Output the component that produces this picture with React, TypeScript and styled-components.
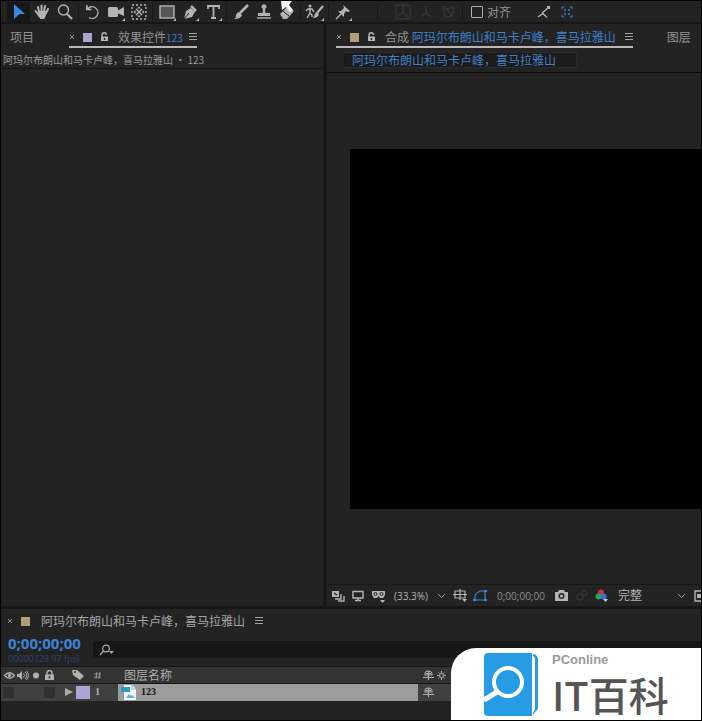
import React from 'react';
import styled, { createGlobalStyle } from 'styled-components';

const cjk = `'Noto Sans CJK SC', sans-serif`;
const latin = `'Open Sans', 'Noto Sans CJK SC', sans-serif`;
const COMP = '阿玛尔布朗山和马卡卢峰，喜马拉雅山';

const GlobalStyle = createGlobalStyle`
  *, *::before, *::after { box-sizing: border-box; }
  body { margin: 0; background: #000; overflow: hidden; }
  button, input, select { font: inherit; color: inherit; margin: 0; }
`;

const Shell = styled.div`
  position: relative;
  display: grid;
  grid-template-rows: 21px minmax(0, 1fr) 111px;
  gap: 2px;
  height: 100vh;
  border: 1px solid #000;
  background: #161616;
  color: #9a9a9a;
  font: 12px/16px ${cjk};
  overflow: hidden;
`;

const Toolbar = styled.header`
  display: flex;
  align-items: center;
  padding-left: 6px;
  background: #232323;
  white-space: nowrap;
`;

const ToolButton = styled.button<{ $active?: boolean; $dim?: boolean; $accent?: boolean }>`
  position: relative;
  display: flex;
  flex: none;
  align-items: center;
  justify-content: center;
  width: 23px;
  height: 20px;
  padding: 0;
  border: 0;
  background: ${p => (p.$active ? '#171717' : 'transparent')};
  color: ${p => (p.$dim ? '#343434' : p.$active || p.$accent ? '#3b87dc' : '#b4b4b4')};
`;

const Divider = styled.span<{ $wide?: boolean }>`
  flex: none;
  width: 1px;
  height: 18px;
  margin: 0 ${p => (p.$wide ? '13px 0 23px' : '2px')};
  background: #181818;
`;

const Cursor = styled.svg`
  position: absolute;
  top: -1px;
  left: 6px;
`;

const Snap = styled.label`
  display: flex;
  align-items: center;
  gap: 4px;
  margin: 0 21px 0 6px;
  color: #929292;
`;

const Check = styled.input`
  appearance: none;
  width: 12px;
  height: 12px;
  border: 1px solid #b5aba5;
  border-radius: 1px;
`;

const Workspace = styled.main`
  display: grid;
  grid-template-columns: minmax(0, 322fr) minmax(0, 374fr);
  gap: 4px;
  min-height: 0;
  padding-bottom: 1px;
`;

const Panel = styled.section`
  display: flex;
  flex-direction: column;
  min-width: 0;
  min-height: 0;
  background: #232323;
  overflow: hidden;
`;

const Tabs = styled.nav<{ $gap: number }>`
  display: flex;
  flex: none;
  gap: ${p => p.$gap}px;
  height: 24px;
  padding: 0 9px;
  white-space: nowrap;
`;

const Tab = styled.div<{ $active?: boolean }>`
  display: flex;
  flex: none;
  align-items: center;
  height: 24px;
  padding-top: 4px;
  border-bottom: 2px solid ${p => (p.$active ? '#b9b9b9' : 'transparent')};
  color: #929292;
`;

const PlainButton = styled.button`
  display: flex;
  align-items: center;
  padding: 0;
  border: 0;
  background: none;
  color: #929292;
`;

const TabLabel = styled.button`
  padding: 0;
  border: 0;
  background: none;
  color: #929292;
  line-height: 16px;
`;

const Swatch = styled.span<{ $color: string }>`
  width: 9px;
  height: 9px;
  margin: 0 8px;
  background: ${p => p.$color};
`;

const Blue = styled.span<{ $small?: boolean }>`
  color: #3f80c8;
  font-size: ${p => (p.$small ? '10px' : '12px')};
  line-height: 12px;
`;

const Menu = styled(PlainButton)<{ $gap: number }>`
  margin-left: ${p => p.$gap}px;
  color: #a5a5a5;
`;

const Source = styled.div`
  flex: none;
  height: 21px;
  padding: 4px 2px 0;
  border-bottom: 1px solid #111;
  font-size: 10px;
  white-space: nowrap;
`;

const Flow = styled.div`
  flex: none;
  height: 25px;
  padding: 4px 17px;
  border-bottom: 1px solid #0c0c0c;
`;

const FlowButton = styled.button`
  display: block;
  height: 16px;
  padding: 0 20px 0 7px;
  border: 1px solid #2b2b2b;
  border-left-color: #181818;
  background: #1b1b1b;
  color: #4080c5;
  line-height: 14px;
  white-space: nowrap;
`;

const Stage = styled.div`
  display: flex;
  flex: 1;
  align-items: center;
  min-height: 0;
  padding-left: 23px;
  overflow: hidden;
`;

const Canvas = styled.div`
  flex: none;
  width: 640px;
  height: 360px;
  background: #000;
`;

const ViewBar = styled.footer`
  display: flex;
  flex: none;
  align-items: center;
  height: 22px;
  padding-left: 1px;
  border-top: 1px solid #181818;
  font: 10px/16px ${latin};
  white-space: nowrap;
  overflow: hidden;
`;

const BarButton = styled(ToolButton)`
  width: 20px;
`;

const Picker = styled.label<{ $width: number }>`
  display: flex;
  flex: none;
  align-items: center;
  width: ${p => p.$width}px;
  margin: 0 4px 0 6px;
`;

const Select = styled.select<{ $size: number }>`
  flex: 1;
  min-width: 0;
  padding: 0;
  border: 0;
  appearance: none;
  background: #232323;
  color: #b5b5b5;
  font-size: ${p => p.$size}px;
`;

const ViewTime = styled.button`
  margin: 0 7px;
  padding: 0;
  border: 0;
  background: none;
  color: #929292;
`;

const TimelineTab = styled.div`
  display: flex;
  flex: none;
  align-items: center;
  height: 24px;
  padding-left: 6px;
  color: #a6a6a6;
  white-space: nowrap;
`;

const Finder = styled.div`
  display: grid;
  flex: none;
  grid-template-columns: 92px minmax(0, 1fr);
  height: 33px;
`;

const Timecode = styled.div`
  padding-left: 7px;
  font-family: ${latin};
  white-space: nowrap;
`;

const Time = styled.button`
  display: block;
  padding: 0;
  border: 0;
  background: none;
  color: #3c83d8;
  font: bold 15px/20px ${latin};
`;

const Frames = styled.div`
  color: #27466d;
  font-size: 9px;
  line-height: 12px;
`;

const Search = styled.label`
  display: flex;
  align-items: center;
  height: 17px;
  margin-top: 8px;
  padding-left: 6px;
  background: #171717;
`;

const SearchInput = styled.input`
  flex: 1;
  min-width: 0;
  height: 16px;
  padding: 0 4px;
  border: 0;
  outline: 0;
  background: none;
`;

const Layers = styled.table`
  flex: none;
  width: 100%;
  table-layout: fixed;
  border-collapse: collapse;
`;

const Col = styled.col<{ $width?: number }>`
  width: ${p => (p.$width ? `${p.$width}px` : 'auto')};
`;

const HeadCell = styled.th`
  height: 17px;
  padding: 0;
  border-top: 1px solid #161616;
  border-bottom: 1px solid #161616;
  background: #333;
  color: #b0b0b0;
  font-weight: normal;
  line-height: 14px;
  text-align: left;
`;

const Cell = styled.td<{ $selected?: boolean }>`
  height: 17px;
  padding: 0;
  background: ${p => (p.$selected ? '#9c9c9c' : '#404040')};
  color: ${p => (p.$selected ? '#151515' : '#b0b0b0')};
  font: bold 10px/14px 'Liberation Serif', serif;
`;

const Inline = styled.div<{ $pad?: number; $gap?: number }>`
  display: flex;
  align-items: center;
  height: 16px;
  gap: ${p => p.$gap ?? 0}px;
  padding-left: ${p => p.$pad ?? 0}px;
`;

const Switch = styled.button`
  width: 11px;
  height: 11px;
  padding: 0;
  border: 0;
  background: #303030;
`;

const LabelColor = styled.span`
  width: 14px;
  height: 13px;
  background: #aaa5d4;
`;

const Badge = styled.aside`
  position: absolute;
  right: 0;
  bottom: 0;
  display: flex;
  width: 250px;
  height: 72px;
  padding: 5px 0 0 33px;
  border-top-left-radius: 25px;
  background: #fff;
`;

const Brand = styled.div`
  padding-left: 12px;
  color: #999;
  font: bold 13px/14px 'Liberation Sans', sans-serif;
  white-space: nowrap;
`;

const BrandName = styled.div`
  color: #555;
  font: 500 40px/54px ${cjk};
`;

type IconProps = { w?: number; h?: number; children: React.ReactNode };
const Icon = ({ w = 16, h = 16, children }: IconProps) => (
  <svg width={w} height={h} viewBox={`0 0 ${w} ${h}`} fill="none" stroke="currentColor" strokeWidth="1.4" aria-hidden="true">
    {children}
  </svg>
);
const corner = <path d="M19 19v-3l-3 3z" fill="currentColor" stroke="none" />;
const Tool = ({ label, children, ...rest }: any) => (
  <ToolButton aria-label={label} {...rest}>{children}</ToolButton>
);
const Chevron = () => <Icon w={9} h={6}><path d="M1 1l3.5 3.5L8 1" strokeWidth="1" /></Icon>;
const Lines = () => <Icon w={8} h={8}><path d="M0 .5h8M0 3.5h8M0 6.5h8" strokeWidth="1" /></Icon>;
const Close = () => (
  <PlainButton aria-label="关闭"><Icon w={6} h={6}><path d="M1 1l4 4M5 1L1 5" strokeWidth="1" /></Icon></PlainButton>
);
const Unlock = () => (
  <PlainButton aria-label="锁定">
    <Icon w={9} h={10}>
      <path d="M2 5V3a2.2 2.2 0 0 1 4.400 0" stroke="#b5b5b5" />
      <path d="M1 4.500h7V9H1z" fill="#b5b5b5" stroke="none" />
      <path d="M4.500 6v2" stroke="#232323" />
    </Icon>
  </PlainButton>
);
const Shy = () => (
  <Icon w={11} h={11}>
    <path d="M2 5V4a3.500 3 0 0 1 7 0v1zM5.500 1v9M3 3.500h5M0 7.500h11" strokeWidth="1.100" />
  </Icon>
);

export default function App() {
  return (
    <Shell>
      <GlobalStyle />
      <Toolbar>
        <Tool label="选取工具" $active>
          <Icon><path d="M3 0l11 10H8.500L3 15z" fill="currentColor" stroke="none" /></Icon>
        </Tool>
        <Tool label="手形工具">
          <Icon>
            <path d="M5 8L4 3M7.500 7V1.500M10 7l1-5M12 9l2-4M1.500 7l4 5" strokeWidth="2" strokeLinecap="round" />
            <path d="M4.500 7h7.500l1 1.500-2 5L10 15H6.500L3.500 11z" fill="currentColor" stroke="none" />
          </Icon>
        </Tool>
        <Tool label="缩放工具">
          <Icon><circle cx="6.500" cy="6" r="5" /><path d="M10 10l5 5" strokeWidth="2" /></Icon>
        </Tool>
        <Divider />
        <Tool label="旋转工具">
          <Icon><path d="M3 4.500a5.800 5.800 0 1 1 1 9M2 1v4.500h4.500" /><path d="M1 2v4h4z" fill="currentColor" stroke="none" /></Icon>
        </Tool>
        <Tool label="摄像机工具">
          <Icon w={20} h={20}><rect x="2" y="5" width="10" height="10" rx="1.500" fill="currentColor" stroke="none" /><path d="M11 9l7-4v9l-7-3z" fill="currentColor" stroke="none" />{corner}</Icon>
        </Tool>
        <Tool label="向后平移工具">
          <Icon>
            <rect x="1" y="1" width="14" height="14" strokeDasharray="2 2" />
            <path d="M5 5l6 6M11 5l-6 6" />
            <path d="M8 2.500l2 2H6zM8 13.500l2-2H6zM2.500 8l2-2v4zM13.500 8l-2-2v4z" fill="currentColor" stroke="none" />
          </Icon>
        </Tool>
        <Divider />
        <Tool label="矩形工具">
          <Icon w={20} h={20}><rect x="3" y="4" width="14" height="12" fill="#555" />{corner}</Icon>
        </Tool>
        <Tool label="钢笔工具">
          <Icon w={20} h={20}>
            <path d="M4 17l2-8 5-3 4 4-3 5z" fill="currentColor" stroke="none" /><path d="M11 4l5 5" strokeWidth="2.500" /><path d="M4 17l5-6" stroke="#232323" strokeWidth="1" />{corner}
          </Icon>
        </Tool>
        <Tool label="文字工具">
          <Icon w={20} h={20}><path d="M5 7V4h11v3M10.500 4v12M8 16h5" strokeWidth="1.800" />{corner}</Icon>
        </Tool>
        <Divider />
        <Tool label="画笔工具">
          <Icon><path d="M15 1L7 9" strokeWidth="2.500" /><path d="M6 8l3 3c-1 3-4 4-8 4 2-1 2-2 2-4 1-2 2-3 3-3z" fill="currentColor" stroke="none" /></Icon>
        </Tool>
        <Tool label="仿制图章工具">
          <Icon><path d="M6.500 9l.5-4a2.500 2.500 0 1 1 2 0l.5 4H14v3H2V9z" fill="currentColor" stroke="none" /><path d="M1 14h14" /></Icon>
        </Tool>
        <Tool label="橡皮擦工具">
          <Icon><path d="M1 10l7-7 7 4-7 8H4z" fill="currentColor" stroke="none" /><path d="M4 7l6 5" stroke="#232323" strokeWidth="1" /></Icon>
          <Cursor width="13" height="12" viewBox="0 0 13 12" aria-hidden="true"><path d="M0 0h11L8 4l4 5-3 2-4-5-4 3z" fill="#f2f2f2" /></Cursor>
        </Tool>
        <Divider />
        <Tool label="Roto 笔刷工具">
          <Icon w={20} h={20}>
            <circle cx="5" cy="4" r="1.500" fill="currentColor" stroke="none" /><path d="M1 9l2-2h4l2 3M5 6v5l-3 5M5 11l2 2v2" /><path d="M18 4l-6 7" strokeWidth="2.200" /><path d="M11 10l3 2c-1 3-3 4-6 4z" fill="currentColor" stroke="none" />{corner}
          </Icon>
        </Tool>
        <Divider />
        <Tool label="操控点工具">
          <Icon w={20} h={20}><path d="M10 3l7 6-2 1-2-1-2 3v3L5 9h3l3-3z" fill="currentColor" stroke="none" /><path d="M8 12l-5 5" />{corner}</Icon>
        </Tool>
        <Divider $wide />
        <Tool label="本地轴模式" $dim><Icon><path d="M8 8V2M8 8l5 5M8 8l-5 5M1 1h14v14H1z" /></Icon></Tool>
        <Tool label="世界轴模式" $dim><Icon><path d="M8 9V2M8 9l5 4M8 9l-5 4" /></Icon></Tool>
        <Tool label="视图轴模式" $dim><Icon><path d="M2 3l4 2 7-2-2 9-7 1zM6 5l5 7" /></Icon></Tool>
        <Divider />
        <Snap><Check type="checkbox" />对齐</Snap>
        <Tool label="对齐选项">
          <Icon><path d="M2 13l5-3.500 4 4M6 9l6-5" /><rect x="11" y="2" width="3" height="3" fill="currentColor" stroke="none" /></Icon>
        </Tool>
        <Tool label="对齐边缘" $accent>
          <Icon w={12} h={12}><path d="M1 3V1h2M9 1h2v2M11 9v2H9M3 11H1V9M3 4h2M7 4h2M4 3v2M8 3v2M4 7v2M8 7v2M3 8h2M7 8h2" strokeWidth="1" /></Icon>
        </Tool>
      </Toolbar>

      <Workspace>
        <Panel>
          <Tabs $gap={35}>
            <Tab><TabLabel>项目</TabLabel></Tab>
            <Tab $active>
              <Close />
              <Swatch $color="#a9a5cd" /><Unlock />
              <Inline $pad={9}><TabLabel>效果控件<Blue $small>123</Blue></TabLabel></Inline>
              <Menu $gap={6} aria-label="面板菜单"><Lines /></Menu>
            </Tab>
          </Tabs>
          <Source>{COMP} • 123</Source>
        </Panel>

        <Panel>
          <Tabs $gap={34}>
            <Tab $active>
              <Close />
              <Swatch $color="#b09e77" /><Unlock />
              <Inline $pad={9}><TabLabel>合成 <Blue>{COMP}</Blue></TabLabel></Inline>
              <Menu $gap={9} aria-label="面板菜单"><Lines /></Menu>
            </Tab>
            <Tab><TabLabel>图层</TabLabel></Tab>
          </Tabs>
          <Flow><FlowButton>{COMP}</FlowButton></Flow>
          <Stage><Canvas /></Stage>
          <ViewBar>
            <BarButton aria-label="始终预览此视图">
              <Icon w={13} h={12}><path d="M0 1h7v6H0z" fill="currentColor" stroke="none" /><path d="M2 3l3 2" stroke="#232323" /><path d="M3 9h6V4M6 11h6V6" /></Icon>
            </BarButton>
            <BarButton aria-label="主查看器"><Icon w={12} h={12}><path d="M1 1.500h10v6.500H1zM6 8v2.500M3 10.500h6" /></Icon></BarButton>
            <BarButton aria-label="眼镜">
              <Icon w={15} h={14}><path d="M1 2h13v4l-2 3H9L7.500 7 6 9H3L1 6z" fill="currentColor" stroke="none" /><circle cx="4.500" cy="5" r="1.500" stroke="#232323" strokeWidth="1" /><circle cx="10.500" cy="5" r="1.500" stroke="#232323" strokeWidth="1" /><path d="M9 11h5l-2.500 3z" fill="currentColor" stroke="none" /></Icon>
            </BarButton>
            <Picker $width={52}>
              <Select $size={10} aria-label="放大率"><option>(33.3%)</option></Select><Chevron />
            </Picker>
            <BarButton aria-label="选择网格和参考线选项">
              <Icon w={14} h={13}><path d="M2 2h10v7H2zM7 0v11M0 5.500h14" strokeWidth="1.200" /><path d="M9 10h5l-2.500 3z" fill="currentColor" stroke="none" /></Icon>
            </BarButton>
            <BarButton aria-label="切换蒙版和形状路径可见性" $accent>
              <Icon w={14} h={13}><path d="M2 11V7c1-3 3-4 5-5h5v9z" strokeWidth="1.200" /><path d="M0 10h3v2H0zM11 10h3v2h-3zM11 1h3v2h-3z" fill="currentColor" stroke="none" /></Icon>
            </BarButton>
            <ViewTime>0;00;00;00</ViewTime>
            <BarButton aria-label="拍摄快照">
              <Icon w={13} h={11}><path d="M0 2h3l1-2h5l1 2h3v9H0z" fill="currentColor" stroke="none" /><circle cx="6.500" cy="6" r="2.300" stroke="#232323" /></Icon>
            </BarButton>
            <BarButton aria-label="显示快照" $dim><Icon w={14} h={13}><circle cx="5" cy="8" r="3" /><circle cx="9" cy="4" r="2.500" /></Icon></BarButton>
            <BarButton aria-label="显示通道">
              <Icon w={13} h={13}><g stroke="none"><circle cx="6" cy="3.500" r="3" fill="#d33240" /><circle cx="3.500" cy="7.500" r="3" fill="#32a158" /><circle cx="8.500" cy="7.500" r="3" fill="#3b70d8" /><path d="M8 10h5l-2.500 3z" fill="#ccc" /></g></Icon>
            </BarButton>
            <Picker $width={68}>
              <Select $size={12} aria-label="分辨率"><option>完整</option></Select><Chevron />
            </Picker>
            <BarButton aria-label="目标区域"><Icon w={12} h={12}><path d="M1 1h10v10H1z" /><path d="M3 4h6v4H3z" fill="currentColor" stroke="none" /></Icon></BarButton>
          </ViewBar>
        </Panel>
      </Workspace>

      <Panel>
        <TimelineTab>
          <Close />
          <Swatch $color="#b09e77" />
          <Inline $pad={3}>{COMP}</Inline>
          <Menu $gap={10} aria-label="面板菜单"><Lines /></Menu>
        </TimelineTab>
        <Finder>
          <Timecode>
            <Time>0;00;00;00</Time>
            <Frames>00000 (29.97 fps)</Frames>
          </Timecode>
          <Search aria-label="搜索">
            <Icon w={16} h={12}><circle cx="7" cy="4.500" r="3.300" stroke="#aaa" strokeWidth="1.200" /><path d="M4.500 7L1 11" stroke="#aaa" /><path d="M10 7h5l-2.500 3z" fill="#aaa" stroke="none" /></Icon>
            <SearchInput type="text" />
          </Search>
        </Finder>
        <Layers>
          <colgroup><Col $width={61} /><Col $width={28} /><Col $width={28} /><Col $width={300} /><Col /></colgroup>
          <thead>
            <tr>
              <HeadCell aria-label="可见性">
                <Inline $pad={3} $gap={2}>
                  <Icon w={11} h={9}><path d="M0.500 4.500Q5.500-1 10.500 4.500 5.500 10 .5 4.500z" /><circle cx="5.500" cy="4.500" r="1.700" fill="currentColor" stroke="none" /></Icon>
                  <Icon w={12} h={11}><path d="M0 4h2l3-3v9L2 7H0z" fill="currentColor" stroke="none" /><path d="M6.500 3.500q2 2 0 4M8 2q3.500 3.500 0 7M9.500 1q4 4.500 0 9" strokeWidth="1" /></Icon>
                  <Icon w={11} h={9}><circle cx="5" cy="4.500" r="3" fill="currentColor" stroke="none" /></Icon>
                  <Icon w={12} h={11}><path d="M3 5V3a2.500 2.500 0 0 1 5 0v2" /><path d="M1 4.500h9V10H1z" fill="currentColor" stroke="none" /><path d="M5.500 6v2.500" stroke="#333" /></Icon>
                </Inline>
              </HeadCell>
              <HeadCell aria-label="标签">
                <Inline $pad={10}><Icon w={12} h={12}><path d="M0 1l5 0 7 6-4 4-7-5z" fill="currentColor" stroke="none" /><circle cx="3" cy="3" r="1" fill="#333" stroke="none" /></Icon></Inline>
              </HeadCell>
              <HeadCell aria-label="编号"><Inline $pad={4}><Icon w={8} h={9}><path d="M3 1L2 8M6 1L5 8M0 3h7M0 6h7" strokeWidth="1" opacity=".7" /></Icon></Inline></HeadCell>
              <HeadCell><Inline $pad={6}>图层名称</Inline></HeadCell>
              <HeadCell aria-label="开关">
                <Inline $pad={5} $gap={3}>
                  <Shy />
                  <Icon w={9} h={9}><circle cx="4.500" cy="4.500" r="2" strokeWidth="1" /><path d="M4.500 0v2M4.500 7v2M0 4.500h2M7 4.500h2M1.500 1.500l1 1M6.500 6.500l1 1M1.500 7.500l1-1M6.500 2.500l1-1" strokeWidth="1" /></Icon>
                </Inline>
              </HeadCell>
            </tr>
          </thead>
          <tbody>
            <tr>
              <Cell><Inline $pad={2} $gap={30}><Switch aria-label="显示" /><Switch aria-label="锁定图层" /></Inline></Cell>
              <Cell><Inline $pad={3} $gap={3}><Icon w={8} h={8}><path d="M0 0l8 4-8 4z" fill="#aaa" stroke="none" /></Icon><LabelColor /></Inline></Cell>
              <Cell><Inline $pad={5}>1</Inline></Cell>
              <Cell $selected>
                <Inline $pad={3} $gap={5}>
                  <Icon w={15} h={15}><path d="M3 0h8l4 4v11H3z" fill="#eef7fb" stroke="none" /><path d="M11 0v4h4" stroke="#8fb9cc" strokeWidth="1" /><path d="M0 2h9v5H0z" fill="#2c9bc8" stroke="none" /><path d="M5 13l3-4 2 2 1-1 3 3z" fill="#63b3d1" stroke="none" /></Icon>
                  123
                </Inline>
              </Cell>
              <Cell><Inline $pad={5}><Shy /></Inline></Cell>
            </tr>
          </tbody>
        </Layers>
      </Panel>

      <Badge>
        <svg width="56" height="63" viewBox="0 0 56 63" aria-hidden="true">
          <path d="M4 0h44v63H4q-4 0-4-4V4q0-4 4-4z" fill="#279ce5" />
          <path d="M13 39L0 47" stroke="#fff" strokeWidth="5" />
          <circle cx="24" cy="29" r="14" fill="#279ce5" stroke="#fff" strokeWidth="4" />
          <path d="M49 1l3 1 2 3v51l-2 2-3 4v-2l2-4V5l-2-2z" fill="#279ce5" />
        </svg>
        <Brand>
          PConline
          <BrandName>IT百科</BrandName>
        </Brand>
      </Badge>
    </Shell>
  );
}
